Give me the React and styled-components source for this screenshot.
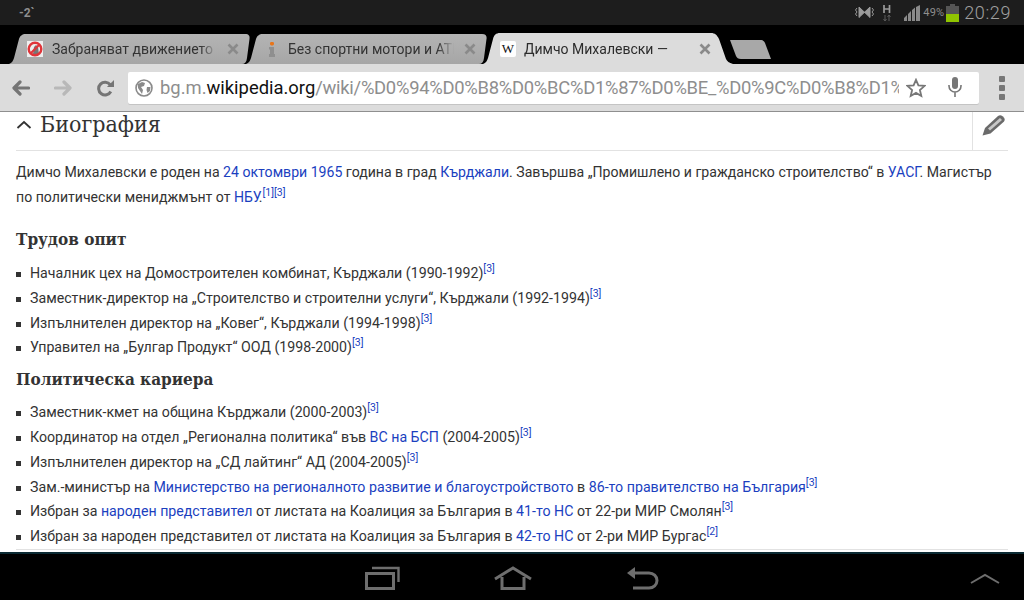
import React from "react";
import styled, { createGlobalStyle } from "styled-components";

const Global = createGlobalStyle`
  html, body { margin: 0; padding: 0; height: 100%; background: #000; }
  #root { height: 100%; }
  * { box-sizing: border-box; }
`;

const Screen = styled.div`
  width: 1024px;
  height: 600px;
  display: flex;
  flex-direction: column;
  overflow: hidden;
  font-family: Roboto, "Liberation Sans", sans-serif;
`;

// any drawn icon in a flex row
const Glyph = styled.svg`
  display: block;
  flex: none;
  margin-left: ${(p) => p.$ml || 0}px;
  margin-right: ${(p) => p.$mr || 0}px;
`;

/* status bar */
const StatusBar = styled.div`
  height: 25px;
  flex: none;
  background: #1d1d1d;
  display: flex;
  align-items: center;
  padding: 0 13px 0 19px;
  color: #8e8e8e;
`;
const Temp = styled.span`
  font-size: 12px;
  font-weight: 700;
  margin-right: auto;
`;
const Percent = styled.span`
  font-size: 11px;
  letter-spacing: 0.2px;
  margin: 0 2px 0 3px;
`;
const Clock = styled.span`
  font-size: 18px;
  font-weight: 300;
  letter-spacing: 0.6px;
  margin-left: 5px;
  color: #a0a0a0;
`;

/* tabs */
const TabStrip = styled.div`
  height: 39px;
  flex: none;
  background: #000;
  display: flex;
  align-items: flex-end;
  padding-left: 9px;
`;
const Tab = styled.div`
  flex: none;
  width: ${(p) => (p.$active ? 250 : 241)}px;
  height: ${(p) => (p.$active ? 31 : 30)}px;
  margin-right: ${(p) => (p.$active ? 0 : -4)}px;
  padding: 0 ${(p) => (p.$active ? 22 : 11)}px 0 ${(p) => (p.$active ? 17 : 18)}px;
  display: flex;
  align-items: center;
  gap: 8px;
  font-size: 14px;
  white-space: nowrap;
  color: ${(p) => (p.$active ? "#2c2c2c" : "#333")};
  background: ${(p) =>
    p.$active ? "#dcdcdc" : "linear-gradient(#b4b4b4, #a6a6a6)"};
  clip-path: ${(p) =>
    p.$active
      ? 'path("M0 31 C3 30 4 28 5 25 L10 6 C11 2 13 0 17 0 L228 0 C232 0 234 2 236 6 L243 26 C244 28 246 30 250 31 Z")'
      : 'path("M0 30 C3 29 4 27 5 24 L10 5 C11 2 13 0 17 0 L236 0 C240 0 241 2 240.5 5 L238 24 C237.5 28 236 30 233 30 Z")'};
`;
const TabTitle = styled.span`
  flex: 1;
  overflow: hidden;
  min-width: 0;
  -webkit-mask-image: linear-gradient(to right, #000 90%, transparent);
  mask-image: linear-gradient(to right, #000 90%, transparent);
`;
const WBadge = styled.span`
  width: 16px;
  height: 16px;
  flex: none;
  background: #fff;
  border-radius: 2px;
  font-family: "Liberation Serif", serif;
  font-size: 13px;
  line-height: 16px;
  text-align: center;
  color: #111;
`;
const NewTab = styled.div`
  width: 41px;
  height: 19px;
  flex: none;
  margin: 0 0 5px -3px;
  background: #a8a8a8;
  clip-path: path("M0 0 L30 0 C33 0 34 1 35 3 L41 19 L11 19 C8 19 7 18 6 16 Z");
`;

/* toolbar */
const Toolbar = styled.div`
  height: 48px;
  flex: none;
  background: #dcdcdc;
  border-bottom: 1px solid #8f8f8f;
  display: flex;
  align-items: center;
  padding: 1px 18px 0 12px;
`;
const Omnibox = styled.div`
  width: 851px;
  height: 32px;
  flex: none;
  margin: -1px 20px 0 0;
  background: #fff;
  border-radius: 2px;
  box-shadow: 0 1px 0 #c4c4c4;
  display: flex;
  align-items: center;
  padding: 0 17px 0 7px;
`;
const Url = styled.div`
  width: 739px;
  margin: 0 7px;
  overflow: hidden;
  white-space: nowrap;
  font-size: 18.4px;
  color: #8e8e8e;
  b {
    font-weight: 400;
    color: #111;
  }
`;
const UrlPath = styled.span`
  letter-spacing: -0.27px;
`;
const MenuDots = styled.div`
  display: flex;
  flex-direction: column;
  gap: 3px;
  i {
    display: block;
    width: 6px;
    height: 6px;
    background: #777;
    border-radius: 1px;
  }
`;

/* article */
const Article = styled.main`
  flex: 1;
  min-height: 0;
  overflow: hidden;
  background: #fff;
  padding: 0 16px;
  color: #333;
  font-size: 14.1px;
`;
const SectionHead = styled.div`
  height: 39px;
  display: flex;
  align-items: center;
  border-bottom: 1px solid #e2e2e2;
`;
const Chevron = styled.svg`
  flex: none;
  margin-bottom: 13px;
`;
const SectionTitle = styled.h2`
  flex: 1;
  margin: 0 0 14px 8px;
  font-family: "DejaVu Serif Condensed", "DejaVu Serif", serif;
  font-weight: 400;
  font-size: 23px;
  line-height: 24px;
  color: #333;
`;
const EditCell = styled.div`
  width: 36px;
  height: 38px;
  padding: 0 3px 11px 0;
  border-left: 1px solid #e2e2e2;
  display: flex;
  align-items: center;
  justify-content: flex-end;
`;
const Para = styled.p`
  margin: 9px 0 0;
  line-height: 25px;
`;
const Sub = styled.h3`
  margin: ${(p) => p.$top}px 0 0;
  font-family: "DejaVu Serif Condensed", "DejaVu Serif", serif;
  font-weight: 700;
  font-size: 17px;
  line-height: 24px;
  color: #333;
`;
const List = styled.ul`
  margin: ${(p) => p.$top}px 0 0;
  padding: 0;
  list-style: none;
  font-size: 14.2px;
`;
const Item = styled.li`
  height: 24.8px;
  line-height: 24.8px;
  white-space: nowrap;
  padding-left: 14px;
  position: relative;
  &::before {
    content: "";
    position: absolute;
    left: 0;
    top: 11px;
    width: 5px;
    height: 5px;
    background: #333;
  }
`;
const Link = styled.a`
  color: #1b3fbf;
`;
const Ref = styled.sup`
  font-size: 10.5px;
  line-height: 0;
  color: #1b3fbf;
`;
const SectionEnd = styled.div`
  height: 1px;
  background: #e2e2e2;
`;

/* android nav */
const NavBar = styled.div`
  height: 48px;
  flex: none;
  background: #000;
  border-top: 2px solid #0b2a33;
  display: flex;
  align-items: center;
  padding: 2px 24px 0 365px;
`;
const NavSpacer = styled.div`
  flex: 1;
`;

const Fav1 = () => (
  <Glyph $mr={1} width="16" height="16" viewBox="0 0 16 16">
    <rect width="16" height="16" fill="#eee" />
    <path d="M6 13 L7 6 L9 4 L11 6 L12 13 Z" fill="#777" />
    <circle cx="8" cy="8" r="6.3" fill="none" stroke="#e0353a" strokeWidth="2.4" />
    <path d="M3.5 12.5 L12.5 3.5" stroke="#e0353a" strokeWidth="2.2" />
  </Glyph>
);
const Fav2 = () => (
  <Glyph width="16" height="16" viewBox="0 0 16 16">
    <rect x="6" y="1" width="4" height="3.4" rx="1.4" fill="#e8751a" />
    <path d="M5 6 H10 V13 H11 V16 H5 V13 H6 V8.5 H5 Z" fill="#8f8f8f" />
  </Glyph>
);
const CloseX = () => (
  <Glyph $ml={2} width="12" height="12" viewBox="0 0 12 12">
    <path d="M1.5 1.5 L10.5 10.5 M10.5 1.5 L1.5 10.5" stroke="#8a8a8a" strokeWidth="2.6" />
  </Glyph>
);

export default function App() {
  return (
    <Screen>
      <Global />
      <StatusBar>
        <Temp>-2`</Temp>
        <Glyph $mr={9} width="19" height="15" viewBox="0 0 19 15">
          <path d="M4 2 L15 12.5 V2 L4 12.5 Z" fill="#9a9a9a" stroke="#9a9a9a" />
          <path d="M2 3 L0.5 5 L2 7 L0.5 9 L2 11 M17 3 L18.5 5 L17 7 L18.5 9 L17 11" fill="none" stroke="#9a9a9a" />
        </Glyph>
        <Glyph $mr={13} width="8" height="16" viewBox="0 0 8 16">
          <path d="M1 0 V8 M6.5 0 V8 M1 4 H6.5" stroke="#9a9a9a" strokeWidth="1.7" fill="none" />
          <path d="M2 16 V10 M0.5 14 L2 16 L3.5 14 M6 16 V10 M4.5 12 L6 10 L7.5 12" stroke="#5c5c5c" fill="none" />
        </Glyph>
        <Glyph width="16" height="16" viewBox="0 0 16 16">
          <path d="M0 13 L3 10 V16 H0 Z M4 9 L7 6 V16 H4 Z M8 5 L11 2.5 V16 H8 Z" fill="#8a8a8a" />
          <path d="M12 2 L16 0 V16 H12 Z" fill="#8a8a8a" />
        </Glyph>
        <Percent>49%</Percent>
        <Glyph width="13" height="18" viewBox="0 0 13 18">
          <rect x="4" y="0" width="5" height="2" fill="#555" />
          <rect x="0" y="2" width="13" height="8" fill="#555" />
          <rect x="0" y="10" width="13" height="8" fill="#8fc400" />
        </Glyph>
        <Clock>20:29</Clock>
      </StatusBar>

      <TabStrip>
        <Tab>
          <Fav1 />
          <TabTitle>Забраняват движението на</TabTitle>
          <CloseX />
        </Tab>
        <Tab>
          <Fav2 />
          <TabTitle>Без спортни мотори и АТВ</TabTitle>
          <CloseX />
        </Tab>
        <Tab $active>
          <WBadge>W</WBadge>
          <TabTitle>Димчо Михалевски —</TabTitle>
          <CloseX />
        </Tab>
        <NewTab />
      </TabStrip>

      <Toolbar>
        <Glyph $mr={24} width="18" height="16" viewBox="0 0 18 16">
          <path d="M16.5 8 H3 M8 2 L2 8 L8 14" fill="none" stroke="#757575" strokeWidth="3.2" strokeLinecap="round" strokeLinejoin="round" />
        </Glyph>
        <Glyph $mr={25} width="18" height="16" viewBox="0 0 18 16">
          <path d="M1.5 8 H15 M10 2 L16 8 L10 14" fill="none" stroke="#b8b8b8" strokeWidth="3.2" strokeLinecap="round" strokeLinejoin="round" />
        </Glyph>
        <Glyph $mr={14} width="17" height="17" viewBox="0 0 18 18">
          <path d="M14.6 12.2 A6.8 6.8 0 1 1 14 5" fill="none" stroke="#757575" strokeWidth="3.2" />
          <path d="M10.5 7.5 H18 V0 Z" fill="#757575" />
        </Glyph>
        <Omnibox>
          <Glyph width="18" height="18" viewBox="0 0 18 18">
            <circle cx="9" cy="9" r="8" fill="none" stroke="#8a8a8a" strokeWidth="1.6" />
            <path d="M3 5 L7 3 L10 4 L9 7 L6 8 L8 11 L7 15 L5 12 L3 9 Z M12 8 L15.5 8 L15 12 L12.5 14 L11.5 11 Z" fill="#8a8a8a" />
          </Glyph>
          <Url>
            bg.m.<b>wikipedia.org</b>
            <UrlPath>/wiki/%D0%94%D0%B8%D0%BC%D1%87%D0%BE_%D0%9C%D0%B8%D1%</UrlPath>
          </Url>
          <Glyph width="20" height="20" viewBox="0 0 20 20">
            <path d="M10 1.8 L12.4 7.4 L18.6 7.9 L13.9 12 L15.3 18 L10 14.9 L4.7 18 L6.1 12 L1.4 7.9 L7.6 7.4 Z" fill="none" stroke="#777" strokeWidth="1.8" />
          </Glyph>
          <Glyph $ml={22} width="14" height="21" viewBox="0 0 14 21">
            <rect x="4" y="0" width="6" height="12" rx="3" fill="#777" />
            <path d="M1 8 V9 A6 6 0 0 0 13 9 V8 M7 15 V20" fill="none" stroke="#777" strokeWidth="1.6" />
          </Glyph>
        </Omnibox>
        <MenuDots>
          <i />
          <i />
          <i />
        </MenuDots>
      </Toolbar>

      <Article>
        <SectionHead>
          <Chevron width="16" height="9" viewBox="0 0 16 9">
            <path d="M1.5 8 L8 2 L14.5 8" fill="none" stroke="#333" strokeWidth="1.8" />
          </Chevron>
          <SectionTitle>Биография</SectionTitle>
          <EditCell>
            <Glyph width="23" height="21" viewBox="0 0 23 21">
              <path d="M0.5 20.5 L3 13 L16 1 C17.5 -0.2 19 0 20.5 1.2 L21.8 2.6 C23 4 23 5.5 21.8 6.8 L8.5 18.5 Z" fill="#6a6a6a" />
              <path d="M6 13.5 L18 3 L20 5 L8 15.5 Z" fill="#c8c8c8" />
            </Glyph>
          </EditCell>
        </SectionHead>
        <Para>
          Димчо Михалевски е роден на <Link>24 октомври 1965</Link> година в град{" "}
          <Link>Кърджали</Link>. Завършва „Промишлено и гражданско строителство“ в{" "}
          <Link>УАСГ</Link>. Магистър по политически мениджмънт от <Link>НБУ</Link>.
          <Ref>[1][3]</Ref>
        </Para>
        <Sub $top={17}>Трудов опит</Sub>
        <List $top={10}>
          <Item>Началник цех на Домостроителен комбинат, Кърджали (1990-1992)<Ref>[3]</Ref></Item>
          <Item>Заместник-директор на „Строителство и строителни услуги“, Кърджали (1992-1994)<Ref>[3]</Ref></Item>
          <Item>Изпълнителен директор на „Ковег“, Кърджали (1994-1998)<Ref>[3]</Ref></Item>
          <Item>Управител на „Булгар Продукт“ ООД (1998-2000)<Ref>[3]</Ref></Item>
        </List>
        <Sub $top={7}>Политическа кариера</Sub>
        <List $top={9}>
          <Item>Заместник-кмет на община Кърджали (2000-2003)<Ref>[3]</Ref></Item>
          <Item>Координатор на отдел „Регионална политика“ във <Link>ВС на БСП</Link> (2004-2005)<Ref>[3]</Ref></Item>
          <Item>Изпълнителен директор на „СД лайтинг“ АД (2004-2005)<Ref>[3]</Ref></Item>
          <Item>Зам.-министър на <Link>Министерство на регионалното развитие и благоустройството</Link> в <Link>86-то правителство на България</Link><Ref>[3]</Ref></Item>
          <Item>Избран за <Link>народен представител</Link> от листата на Коалиция за България в <Link>41-то НС</Link> от 22-ри МИР Смолян<Ref>[3]</Ref></Item>
          <Item>Избран за народен представител от листата на Коалиция за България в <Link>42-то НС</Link> от 2-ри МИР Бургас<Ref>[2]</Ref></Item>
        </List>
        <SectionEnd />
      </Article>

      <NavBar>
        <Glyph $mr={93} width="35" height="24" viewBox="0 0 35 24">
          <path d="M7 2 H33.5 V16" fill="none" stroke="#6e6e6e" strokeWidth="2.4" />
          <rect x="1.5" y="7.5" width="27" height="15" fill="none" stroke="#6e6e6e" strokeWidth="3" />
        </Glyph>
        <Glyph $mr={94} width="40" height="24" viewBox="0 0 40 24">
          <path d="M2 13 L20 2 L38 13 M9 11 V22.5 H31 V11" fill="none" stroke="#6e6e6e" strokeWidth="3" />
        </Glyph>
        <Glyph width="32" height="24" viewBox="0 0 32 24">
          <path d="M6 7 H22 A8 7.5 0 0 1 22 22 H6" fill="none" stroke="#6e6e6e" strokeWidth="3" />
          <path d="M0 7 L8 1 V13 Z" fill="#6e6e6e" />
        </Glyph>
        <NavSpacer />
        <Glyph width="30" height="11" viewBox="0 0 30 11">
          <path d="M1 10 L15 2 L29 10" fill="none" stroke="#6e6e6e" strokeWidth="2" />
        </Glyph>
      </NavBar>
    </Screen>
  );
}
